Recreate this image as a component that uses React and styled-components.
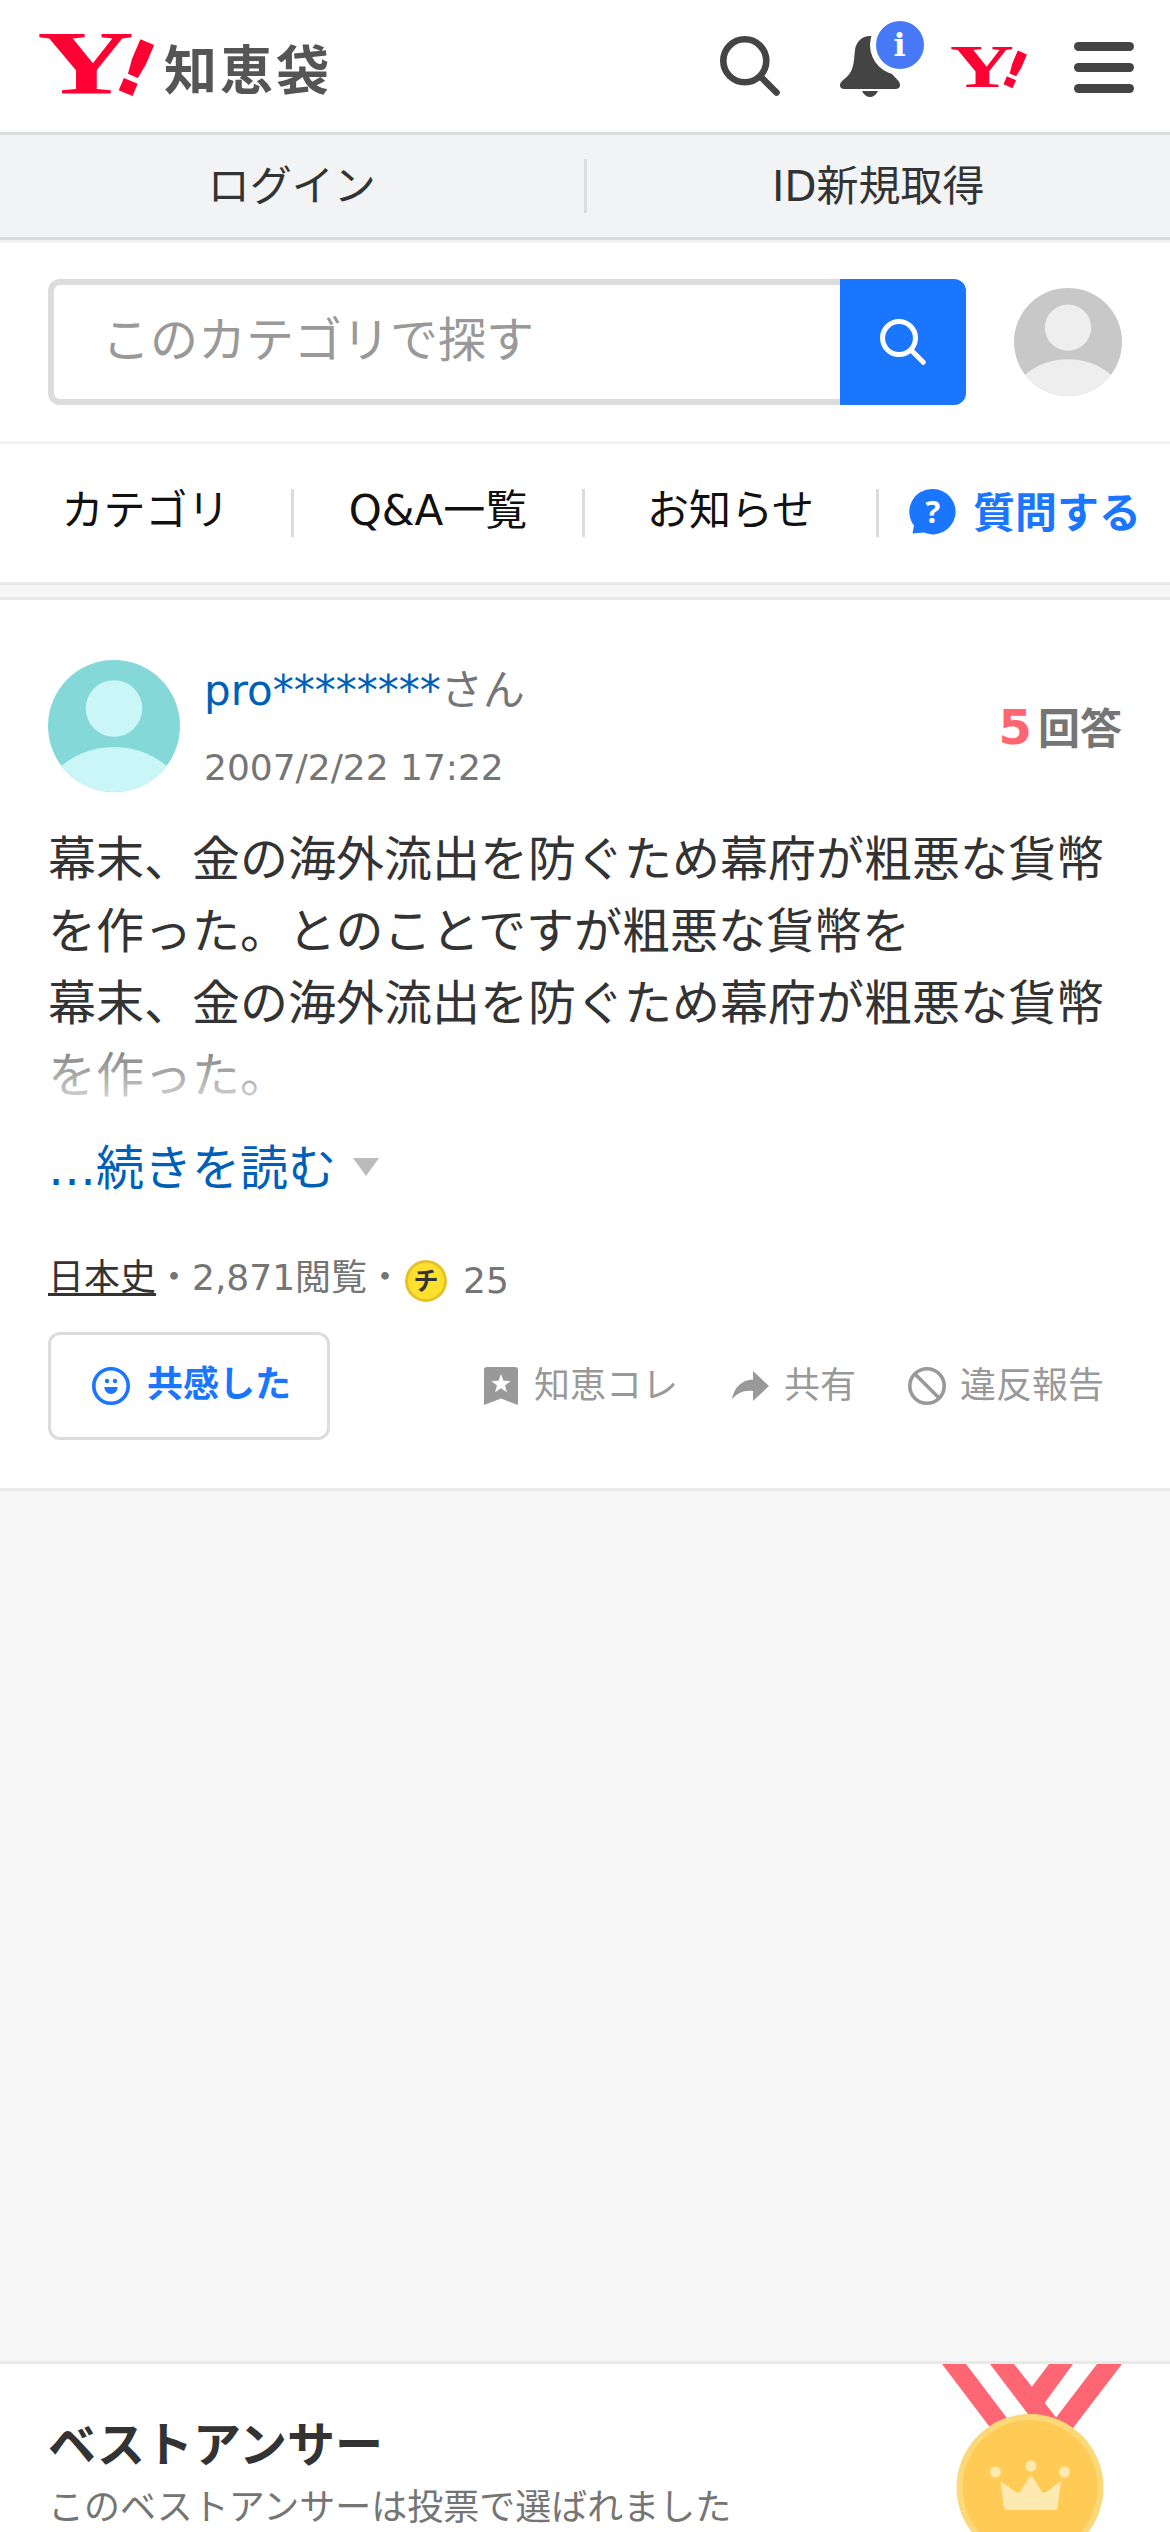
import React from "react";
import styled, { createGlobalStyle } from "styled-components";

const GlobalStyle = createGlobalStyle`
  *, *::before, *::after { box-sizing: border-box; }
  body {
    margin: 0;
    background: #f6f6f6;
    color: #333;
    font-family: "DejaVu Sans", "Noto Sans CJK JP", sans-serif;
    font-size: 42px;
    line-height: 1;
  }
  a { color: inherit; text-decoration: none; }
  h2, p { margin: 0; font-weight: inherit; font-size: inherit; }
  button { font: inherit; margin: 0; padding: 0; border: 0; background: none; color: inherit; }
  svg { display: block; flex: none; overflow: visible; }
`;

const Page = styled.div`
  width: 1170px;
  height: 2532px;
  overflow: hidden;
  display: flex;
  flex-direction: column;
`;

const Header = styled.header`
  height: 135px;
  flex: none;
  display: flex;
  align-items: center;
  padding: 0 36px 0 39px;
  background: #fff;
  border-bottom: 3px solid #d9dcdd;
`;

const Brand = styled.a`
  display: flex;
  align-items: center;
  margin-right: auto;
`;

const BrandMark = styled.span`
  margin-top: -4px;
`;

const BrandName = styled.span`
  margin-left: 7px;
  padding-top: 1px;
  font-family: "Noto Sans CJK JP", sans-serif;
  font-size: 53px;
  line-height: 60px;
  font-weight: 700;
  letter-spacing: 3px;
  color: #555;
`;

const HeaderTools = styled.nav`
  display: flex;
  align-items: center;
`;

const Tool = styled.a`
  display: flex;
  margin-left: ${(p) => p.$gap || 0}px;
  margin-top: ${(p) => p.$shift || 0}px;
`;

const LoginBar = styled.div`
  height: 105px;
  flex: none;
  display: grid;
  grid-template-columns: 1fr 3px 1fr;
  align-items: center;
  background: #f1f3f5;
  border-bottom: 3px solid #d9dcdd;
`;

const LoginLink = styled.a`
  text-align: center;
  padding-top: 1px;
  line-height: 101px;
`;

const Rule = styled.span`
  width: 3px;
  height: ${(p) => p.$height}px;
  background: #dcdcdc;
`;

const SearchArea = styled.section`
  height: 204px;
  flex: none;
  display: flex;
  align-items: flex-start;
  padding: 36px 48px 0;
  background: #fff;
  border-top: 3px solid #f1f1f1;
  border-bottom: 3px solid #f3f3f3;
`;

const SearchForm = styled.div`
  display: flex;
  flex: 1;
  height: 126px;
`;

const SearchField = styled.div`
  flex: 1;
  border: 6px solid #dcdcdc;
  border-right: 0;
  border-radius: 12px 0 0 12px;
  padding-left: 48px;
  font-size: 48px;
  line-height: 110px;
  color: #999;
`;

const SearchButton = styled.button`
  width: 126px;
  display: flex;
  align-items: center;
  justify-content: center;
  background: #1a75ff;
  border-radius: 0 12px 12px 0;
`;

const AvatarSlot = styled.span`
  flex: none;
  margin: ${(p) => p.$margin};
`;

const Nav = styled.nav`
  height: 141px;
  flex: none;
  display: grid;
  grid-template-columns: 291px 3px 288px 3px 291px 3px 291px;
  align-items: center;
  background: #fff;
  border-bottom: 3px solid #e9e9e9;
`;

const NavLink = styled.a`
  text-align: center;
  line-height: 133px;
  height: 138px;
  color: #111;
`;

const AskLink = styled.a`
  display: flex;
  align-items: center;
  padding-left: 31px;
  gap: 17px;
  color: #1a75ff;
  font-weight: 700;
  line-height: 48px;
`;

const AskLabel = styled.span`
  padding-top: 2px;
`;

const Card = styled.section`
  flex: none;
  background: #fff;
  border-top: 3px solid #e9e9e9;
  border-bottom: ${(p) => (p.$open ? "0" : "3px solid #ebebeb")};
`;

const Question = styled(Card)`
  margin-top: 12px;
  height: 894px;
  padding: 60px 48px 0;
`;

const Asker = styled.div`
  display: flex;
  height: 132px;
`;

const AskerText = styled.div`
  padding: 0 0 0 24px;
  flex: 1;
  color: #757575;
`;

const UserName = styled.p`
  line-height: 61px;
`;

const UserLink = styled.a`
  color: #0060b8;
`;

const PostedAt = styled.p`
  margin-top: 20px;
  font-size: 36px;
  line-height: 54px;
`;

const AnswerCount = styled.div`
  display: flex;
  align-items: baseline;
  gap: 6px;
  padding-top: 37px;
  height: 132px;
  line-height: 60px;
  font-weight: 700;
  color: #757575;
`;

const CountNumber = styled.strong`
  font-size: 48px;
  color: #ff6670;
`;

const QuestionBody = styled.div`
  position: relative;
  margin-top: 31px;
  height: 288px;
  font-size: 48px;
  line-height: 72px;
  &::after {
    content: "";
    position: absolute;
    left: 0;
    right: 0;
    bottom: 0;
    height: 72px;
    background: linear-gradient(rgba(255, 255, 255, 0.3), rgba(255, 255, 255, 0.87));
  }
`;

const ReadMore = styled.button`
  display: flex;
  align-items: center;
  gap: 17px;
  margin-top: 21px;
  height: 72px;
  font-size: 48px;
  line-height: 72px;
  color: #0060b8;
`;

const Triangle = styled.span`
  margin-top: -2px;
  border: 13.5px solid transparent;
  border-top: 18px solid #bbb;
  border-bottom: 0;
`;

const Meta = styled.div`
  display: flex;
  align-items: center;
  margin-top: 47px;
  height: 54px;
  font-size: 36px;
  line-height: 54px;
  color: #757575;
`;

const Category = styled.a`
  height: 45px;
  line-height: 54px;
  margin-top: -9px;
  border-bottom: 3px solid #333;
  color: #333;
`;

const Coins = styled.span`
  display: flex;
  align-items: center;
  gap: 16px;
  margin-left: 2px;
  padding-top: 6px;
`;

const Actions = styled.div`
  display: flex;
  align-items: center;
  height: 108px;
  margin-top: 27px;
  padding-right: 18px;
  font-size: 36px;
  line-height: 54px;
  color: #999;
`;

const EmpathyButton = styled.button`
  display: flex;
  align-items: center;
  justify-content: center;
  gap: 17px;
  width: 282px;
  height: 108px;
  margin-right: auto;
  padding-left: 5px;
  border: 3px solid #dcdcdc;
  border-radius: 12px;
  font-weight: 700;
  color: #1a75ff;
`;

const Action = styled.a`
  display: flex;
  align-items: center;
  gap: ${(p) => p.$inner}px;
  margin-left: ${(p) => p.$gap || 0}px;
`;

const Raised = styled.span`
  margin-top: -2px;
`;

const AdSpace = styled.div`
  flex: none;
  height: 870px;
`;

const BestAnswer = styled(Card)`
  display: flex;
  justify-content: space-between;
  height: 171px;
  padding: 0 48px;
`;

const BestTitle = styled.h2`
  padding-top: 45px;
  font-size: 48px;
  line-height: 72px;
  font-weight: 700;
`;

const BestNote = styled.p`
  font-size: 36px;
  line-height: 54px;
  color: #757575;
`;

const YMark = ({ width, height }) => (
  <svg width={width} height={height} viewBox="0 0 118 62" aria-label="Y!">
    <g fill="#ff0033" fontWeight="700">
      <text transform="translate(-2 60.5) scale(1.46 1)" fontFamily="Liberation Serif" fontSize="92">Y</text>
      <text transform="translate(86.5 60) rotate(23) scale(1.12 1)" fontFamily="DejaVu Sans" fontSize="76" textAnchor="middle">!</text>
    </g>
  </svg>
);

const SearchIcon = ({ size, stroke, color }) => (
  <svg width={size} height={size} viewBox="0 0 60 60" fill="none" stroke={color} strokeWidth={stroke} strokeLinecap="round">
    <circle cx="24.8" cy="24.8" r={24.8 - stroke / 2} />
    <path d="M42 42 56.5 56.5" />
  </svg>
);

const BellIcon = () => (
  <svg width="84" height="90" viewBox="0 0 84 90">
    <path fill="#444" d="M30 21c-8 0-14 6-15 14-1 9-1 17-5 23-3 5-10 8-10 12 0 3 2 4 5 4h50c3 0 5-1 5-4 0-4-4-6-8-11-5-7-6-15-7-26-1-8-7-12-15-12z" />
    <path fill="#444" d="M22 76h16c-2 4-5 6-8 6s-6-2-8-6z" />
    <circle cx="60" cy="30" r="30" fill="#fff" />
    <circle cx="60" cy="30" r="24" fill="#4779f6" />
    <text x="59.5" y="40.5" fontFamily="DejaVu Serif" fontWeight="700" fontSize="32" textAnchor="middle" fill="#fff">i</text>
  </svg>
);

const MenuIcon = () => (
  <svg width="60" height="51" viewBox="0 0 60 51" fill="#444">
    <rect width="60" height="9" rx="4.5" />
    <rect y="21" width="60" height="9" rx="4.5" />
    <rect y="42" width="60" height="9" rx="4.5" />
  </svg>
);

const Avatar = ({ size, back, front, id }) => (
  <svg width={size} height={size} viewBox="0 0 132 132">
    <clipPath id={id}><circle cx="66" cy="66" r="66" /></clipPath>
    <g clipPath={`url(#${id})`}>
      <rect width="132" height="132" fill={back} />
      <circle cx="66" cy="48.5" r="28.3" fill={front} />
      <circle cx="66" cy="170" r="83" fill={front} />
    </g>
  </svg>
);

const AskIcon = () => (
  <svg width="46" height="48" viewBox="0 0 46 48">
    <path fill="#1a75ff" d="M23 0a22.7 22.7 0 1 1-9 43.6L2.500 44.500 4 36.500A22.700 22.700 0 0 1 23 0z" />
    <text x="23" y="34" fontFamily="Open Sans" fontWeight="700" fontSize="31" textAnchor="middle" fill="#fff">?</text>
  </svg>
);

const CoinIcon = () => (
  <svg width="42" height="42" viewBox="0 0 42 42">
    <circle cx="21" cy="21" r="19.5" fill="#ffe02e" stroke="#e6c229" strokeWidth="3" />
    <text x="21" y="30" fontFamily="Noto Sans CJK JP" fontWeight="700" fontSize="25" textAnchor="middle" fill="#333">チ</text>
  </svg>
);

const SmileIcon = () => (
  <svg width="38" height="38" viewBox="0 0 38 38" fill="#1a75ff">
    <circle cx="19" cy="19" r="17.2" fill="none" stroke="#1a75ff" strokeWidth="3.6" />
    <circle cx="15" cy="14" r="2.2" />
    <circle cx="23" cy="14" r="2.2" />
    <path d="M12.3 20h13.400a6.700 7 0 0 1-13.400 0z" />
  </svg>
);

const BookmarkIcon = () => (
  <svg width="34" height="38" viewBox="0 0 34 38">
    <path fill="#999" d="M3 0h28a3 3 0 0 1 3 3v35l-17-6.5L0 38V3a3 3 0 0 1 3-3z" />
    <path fill="#fff" d="m17 7 2.500 6.700 7.100.3-5.600 4.400 2 6.900-6-4-6 4 2-6.900-5.600-4.400 7.100-.3z" />
  </svg>
);

const ShareIcon = () => (
  <svg width="37" height="30" viewBox="0 0 37 30">
    <path fill="#999" d="M21 0 37 15 21 30V20C12 19 5 22 0 28.500 2 16 10 9 21 8.500z" />
  </svg>
);

const BanIcon = () => (
  <svg width="38" height="38" viewBox="0 0 38 38" fill="none" stroke="#999" strokeWidth="3.6">
    <circle cx="19" cy="19" r="17.2" />
    <path d="m7 7 24 24" />
  </svg>
);

const Medal = () => (
  <svg width="180" height="168" viewBox="0 0 180 168">
    <g fill="#ff6673">
      <path d="M0 0h24l50 66H50z" />
      <path d="M48 0h24l52 66H98z" />
      <path d="M107 0h24L96 48 80 36z" />
      <path d="M155 0h25l-52 68h-25z" />
    </g>
    <circle cx="88" cy="123.5" r="73.5" fill="#fcd978" />
    <circle cx="88" cy="123.5" r="67.5" fill="#ffcb55" />
    <g fill="#feeab0">
      <circle cx="53.5" cy="108" r="5.5" />
      <circle cx="89" cy="102" r="5.5" />
      <circle cx="122.5" cy="108" r="5.5" />
      <path d="m58.500 117 16 11.500 3 0 10-15.500q1.500-1.500 3 0l10 15.500 3 0 15.500-11.500-3.500 27q-.5 2-2.500 2H64.500q-2 0-2.500-2z" />
    </g>
  </svg>
);

export default function App() {
  return (
    <Page>
      <GlobalStyle />
      <Header>
        <Brand href="#">
          <BrandMark><YMark width={118} height={62} /></BrandMark>
          <BrandName>知恵袋</BrandName>
        </Brand>
        <HeaderTools>
          <Tool href="#"><SearchIcon size={60} stroke={6.6} color="#444" /></Tool>
          <Tool href="#" $gap={60} $shift={-12}><BellIcon /></Tool>
          <Tool href="#" $gap={27} $shift={2}><YMark width={78} height={42} /></Tool>
          <Tool href="#" $gap={45} $shift={2}><MenuIcon /></Tool>
        </HeaderTools>
      </Header>
      <LoginBar>
        <LoginLink href="#">ログイン</LoginLink>
        <Rule $height={54} />
        <LoginLink href="#">ID新規取得</LoginLink>
      </LoginBar>
      <SearchArea>
        <SearchForm>
          <SearchField>このカテゴリで探す</SearchField>
          <SearchButton aria-label="search"><SearchIcon size={46} stroke={6.6} color="#fff" /></SearchButton>
        </SearchForm>
        <AvatarSlot $margin="9px 0 0 48px">
          <Avatar size={108} back="#c8c8c8" front="#eeeeee" id="viewer" />
        </AvatarSlot>
      </SearchArea>
      <Nav>
        <NavLink href="#">カテゴリ</NavLink>
        <Rule $height={48} />
        <NavLink href="#">Q&amp;A一覧</NavLink>
        <Rule $height={48} />
        <NavLink href="#">お知らせ</NavLink>
        <Rule $height={48} />
        <AskLink href="#"><AskIcon /><AskLabel>質問する</AskLabel></AskLink>
      </Nav>
      <Question>
        <Asker>
          <AvatarSlot>
            <Avatar size={132} back="#84d9d8" front="#caf6f7" id="asker" />
          </AvatarSlot>
          <AskerText>
            <UserName><UserLink href="#">pro********</UserLink>さん</UserName>
            <PostedAt>2007/2/22 17:22</PostedAt>
          </AskerText>
          <AnswerCount><CountNumber>5</CountNumber>回答</AnswerCount>
        </Asker>
        <QuestionBody>
          幕末、金の海外流出を防ぐため幕府が粗悪な貨幣を作った。とのことですが粗悪な貨幣を<br />
          幕末、金の海外流出を防ぐため幕府が粗悪な貨幣を作った。
        </QuestionBody>
        <ReadMore>…続きを読む<Triangle /></ReadMore>
        <Meta>
          <Category href="#">日本史</Category>
          <span>・2,871閲覧・</span>
          <Coins><CoinIcon />25</Coins>
        </Meta>
        <Actions>
          <EmpathyButton><SmileIcon /><Raised>共感した</Raised></EmpathyButton>
          <Action href="#" $inner={16}><BookmarkIcon />知恵コレ</Action>
          <Action href="#" $inner={15} $gap={54}><ShareIcon />共有</Action>
          <Action href="#" $inner={14} $gap={52}><BanIcon />違反報告</Action>
        </Actions>
      </Question>
      <AdSpace />
      <BestAnswer $open>
        <div>
          <BestTitle>ベストアンサー</BestTitle>
          <BestNote>このベストアンサーは投票で選ばれました</BestNote>
        </div>
        <Medal />
      </BestAnswer>
    </Page>
  );
}
